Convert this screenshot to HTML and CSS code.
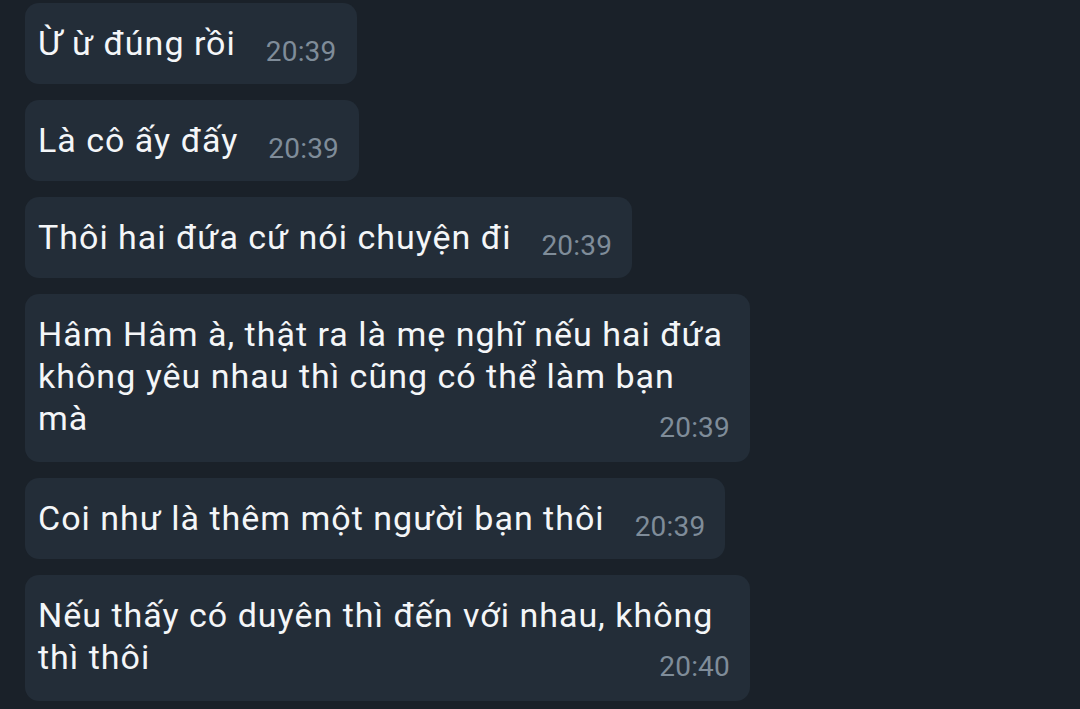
FILE: index.html
```html
<!DOCTYPE html>
<html lang="vi">
<head>
  <meta charset="UTF-8">
  <meta name="viewport" content="width=device-width, initial-scale=1.0">
  <title>Chat</title>
  <link rel="stylesheet" href="styles.css">
</head>
<body>
  <div class="chat">
    <div class="bubble">
      <span class="text">Ừ ừ đúng rồi</span>
      <span class="time">20:39</span>
    </div>
    <div class="bubble">
      <span class="text">Là cô ấy đấy</span>
      <span class="time">20:39</span>
    </div>
    <div class="bubble">
      <span class="text">Thôi hai đứa cứ nói chuyện đi</span>
      <span class="time">20:39</span>
    </div>
    <div class="bubble multi">
      <span class="text">Hâm Hâm à, thật ra là mẹ nghĩ nếu hai đứa không yêu nhau thì cũng có thể làm bạn mà</span>
      <span class="time">20:39</span>
    </div>
    <div class="bubble">
      <span class="text">Coi như là thêm một người bạn thôi</span>
      <span class="time">20:39</span>
    </div>
    <div class="bubble multi">
      <span class="text">Nếu thấy có duyên thì đến với nhau, không thì thôi</span>
      <span class="time">20:40</span>
    </div>
  </div>
</body>
</html>
```

FILE: styles.css
```css
body {
  margin: 0;
  padding: 0;
  background-color: #1a2129;
  font-family: Roboto, "Liberation Sans", sans-serif;
  height: 709px;
  overflow: hidden;
}

.chat {
  display: flex;
  flex-direction: column;
  align-items: flex-start;
  gap: 16px;
  padding: 3px 0 0 25px;
}

.bubble {
  display: flex;
  align-items: flex-end;
  max-width: 725px;
  box-sizing: border-box;
  padding: 19px 20px 20px 13px;
  background-color: #232d38;
  border-radius: 14px;
}

.text {
  color: #f4f6f8;
  font-size: 34px;
  line-height: 42px;
  letter-spacing: 1px;
}

.time {
  margin-left: 30px;
  margin-bottom: -2px;
  color: #7f8c99;
  font-size: 28px;
  line-height: 28px;
  letter-spacing: 0.2px;
  white-space: nowrap;
}

.bubble.multi {
  flex-direction: column;
  align-items: stretch;
  width: 725px;
}

.bubble.multi .time {
  align-self: flex-end;
  margin: -25px 0 0 0;
}
```
